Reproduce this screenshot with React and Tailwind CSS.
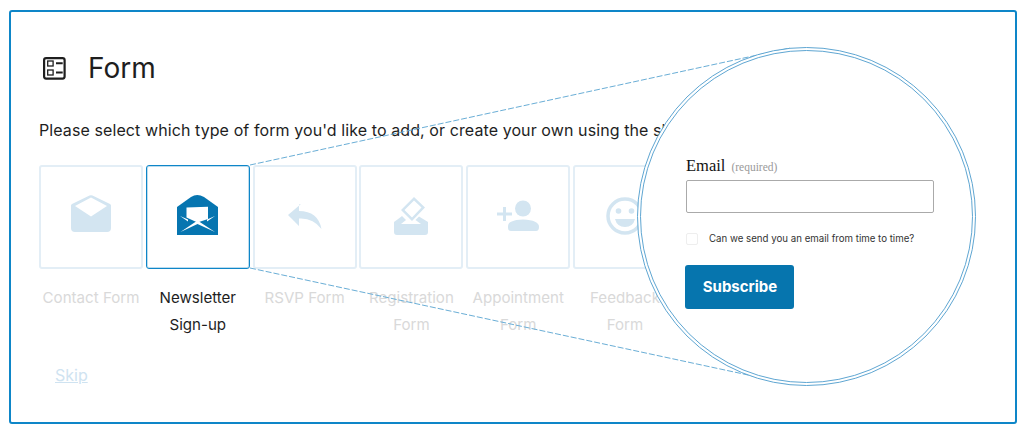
const font = { fontFamily: 'Inter, "Liberation Sans", sans-serif' };

function IconContact() {
  return (
    <svg width="40" height="37" viewBox="0 0 40 37" fill="#d3e5f1">
      <path fillRule="evenodd" d="M0 10.500 Q0 9.500 1 9 L18.500 0.600 Q20 0 21.500 0.600 L39 9 Q40 9.500 40 10.500 L40 33 Q40 37 36 37 L4 37 Q0 37 0 33 Z M4 11 L20 2.500 L36 11 L20 21.500 Z" />
    </svg>
  );
}
function IconNewsletter() {
  return (
    <svg width="41" height="41" viewBox="0 0 41 41">
      <path fill="#0675b0" d="M0 13 L14 3 Q20 -1 27 3 L41 13 L41 41 L0 41 Z" />
      <path fill="#fff" d="M9.500 13.500 L31 12.700 L31 25 L20.500 28.500 L9.500 23.500 Z" />
      <path fill="#fff" d="M3 22 L11 25.500 L11 27.500 Z M38 22 L30 25.500 L30 27.500 Z M3.500 38 L20.500 26.500 L38 38 L20.500 30 Z" />
    </svg>
  );
}
function IconReply() {
  return (
    <svg width="34" height="25" viewBox="0 0 34 25" fill="#d3e5f1">
      <path d="M13 0 L0 11 L11 22 L11 14.500 Q25 13.500 33.500 25 Q30 7 11 7 L11 0.500 Z" />
    </svg>
  );
}
function IconRegistration() {
  return (
    <svg width="34" height="38" viewBox="0 0 34 38" fill="#d3e5f1">
      <path fillRule="evenodd" d="M20 0 L31 10.500 L18 24 L7 13 Z M20 3.500 L10.500 13 L18 20.500 L27.500 10.500 Z" />
      <path d="M5.500 21 L8 19 L12 23 L7 27 L27 27 L21.500 23 L25 19.500 L34 25 L34 35 Q34 38 31 38 L3 38 Q0 38 0 35 L0 25 Z" />
    </svg>
  );
}
function IconPerson() {
  return (
    <svg width="42" height="31" viewBox="0 0 42 31" fill="#d3e5f1">
      <circle cx="26" cy="8.500" r="8" />
      <path d="M11 26 Q11 20 26 19.500 Q42 20 42 27 Q42 31 39 31 L14 31 Q11 31 11 28 Z" />
      <path fill="none" stroke="#d3e5f1" strokeWidth="3" d="M0 14 L15 14 M7.500 7 L7.500 21" />
    </svg>
  );
}
function IconSmile() {
  return (
    <svg width="38" height="38" viewBox="0 0 38 38">
      <circle cx="19" cy="19" r="17" fill="none" stroke="#d3e5f1" strokeWidth="3.500" />
      <circle cx="12.500" cy="14" r="2.800" fill="#d3e5f1" />
      <circle cx="25.500" cy="14" r="2.800" fill="#d3e5f1" />
      <path d="M9 22 L29 22 Q27 30 19 30 Q11 30 9 22 Z" fill="#d3e5f1" />
    </svg>
  );
}

const tiles = [
  { icon: <IconContact />, lift: "mb-[7px]", label: ["Contact Form"] },
  { icon: <IconNewsletter />, lift: "mb-[5px]", label: ["Newsletter", "Sign-up"], active: true },
  { icon: <IconReply />, lift: "mb-[2px]", label: ["RSVP Form"] },
  { icon: <IconRegistration />, lift: "mb-[2px]", label: ["Registration", "Form"] },
  { icon: <IconPerson />, lift: "mb-[3px]", label: ["Appointment", "Form"] },
  { icon: <IconSmile />, lift: "mb-[2px]", label: ["Feedback", "Form"] },
];

export default function App() {
  return (
    <div className="relative w-[1024px] h-[433px] bg-white overflow-hidden pl-[9px] pt-[10px] text-[#1e1e1e]" style={font}>
      <div className="w-[1008px] h-[414px] border-2 border-[#0e86c8] rounded-[3px] pl-[28px] pt-[36px] flex flex-col">
        <div className="flex items-center h-[40px]">
          <svg width="23" height="23" viewBox="0 0 23 23" fill="none" stroke="#1e1e1e" className="mr-[22px] ml-[4px]">
            <rect x="1.100" y="1.100" width="20.500" height="20.500" rx="2" strokeWidth="2.200" />
            <rect x="4.700" y="4" width="5.400" height="5" strokeWidth="1.300" />
            <rect x="4.700" y="13" width="5.400" height="5" strokeWidth="1.300" />
            <path d="M13 6.300 L19.700 6.300 M13 15.500 L19.700 15.500" strokeWidth="1.900" />
          </svg>
          <h1 className="text-[28px] leading-[40px] font-normal">Form</h1>
        </div>
        <p className="mt-[30px] text-[16px] leading-[24px] tracking-[0.09px] whitespace-nowrap">
          Please select which type of form you'd like to add, or create your own using the skip option.
        </p>
        <div className="flex gap-[2.800px] mt-[23px]">
          {tiles.map((t) => (
            <div key={t.label[0]} className="w-[104px] shrink-0 flex flex-col items-center">
              <div className={`w-[104px] h-[104px] rounded-[3px] flex items-center justify-center ${t.active ? "border border-[#0e86c8] shadow-[inset_0_0_0_1px_#bcdcee]" : "border-2 border-[#e3eef6]"}`}>
                <div className={`flex ${t.lift}`}>{t.icon}</div>
              </div>
              <div className={`mt-[15px] text-[15.100px] leading-[27px] text-center whitespace-nowrap ${t.active ? "text-[#1e1e1e]" : "text-[#d9d9d9]"}`}>
                {t.label.map((l) => (
                  <div key={l}>{l}</div>
                ))}
              </div>
            </div>
          ))}
        </div>
        <a className="mt-[25px] ml-[16px] text-[16px] leading-[24px] text-[#cfe3f1] underline">Skip</a>
      </div>

      <svg className="absolute inset-0 pointer-events-none" width="1024" height="433" fill="none">
        <path d="M250 165 L790 48 M250 268 L790 384" stroke="#6aaed6" strokeWidth="1" strokeDasharray="6 2" />
      </svg>

      <div className="absolute left-[636.500px] top-[46.500px] w-[339px] h-[339px] rounded-full bg-white border-[4px] border-double border-[#5fa6d2] pl-[45.500px] pt-[103.500px] flex flex-col items-start">
        <div className="flex items-baseline h-[22px]" style={{ fontFamily: '"Liberation Serif", serif' }}>
          <span className="text-[16.500px] text-[#111]">Email</span>
          <span className="ml-[6px] text-[11.500px] text-[#999]">(required)</span>
        </div>
        <div className="mt-[4px] w-[248px] h-[33px] rounded-[2px] border border-[#aaa] bg-white" />
        <div className="flex items-center mt-[20px] h-[12px]">
          <div className="w-[12px] h-[12px] rounded-[2px] border border-[#eeeeee]" />
          <span className="ml-[11px] text-[9.700px] text-[#333] whitespace-nowrap">Can we send you an email from time to time?</span>
        </div>
        <div className="mt-[20px] -ml-[1px] w-[109px] h-[44px] rounded-[3px] bg-[#0675ae] text-white font-bold text-[15px] flex items-center justify-center">
          <span className="ml-[1px]">Subscribe</span>
        </div>
      </div>
    </div>
  );
}
